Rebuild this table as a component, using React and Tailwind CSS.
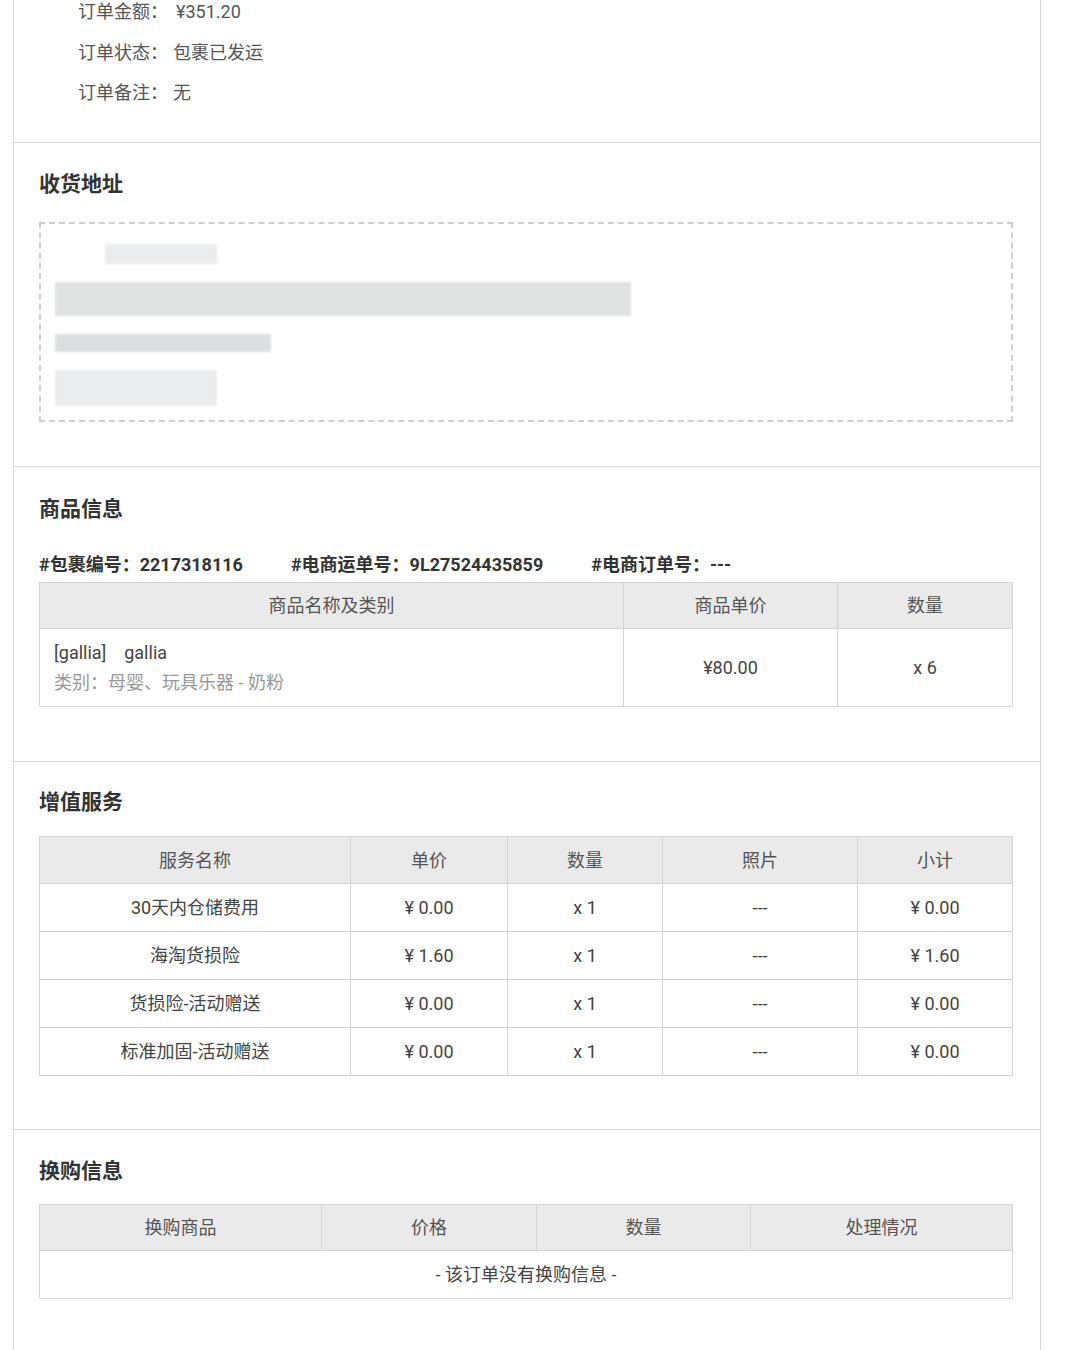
import React from 'react';

const font = { fontFamily: 'Roboto, "Noto Sans CJK SC", sans-serif' };

function Heading({ children }) {
  return <h2 className="text-[21px] leading-[28px] font-bold text-[#333]">{children}</h2>;
}

const th = 'border border-[#d4d4d4] bg-[#ebeaeb] font-normal text-[18px] text-[#555] text-center h-[46px]';
const td = 'border border-[#d4d4d4] text-[18px] text-[#444] text-center h-[48px]';

function Blur({ className }) {
  return <div className={'bg-[#d9dbdc] blur-[1px] ' + className} />;
}

function App() {
  const services = [
    ['30天内仓储费用', '¥ 0.00', 'x 1', '---', '¥ 0.00'],
    ['海淘货损险', '¥ 1.60', 'x 1', '---', '¥ 1.60'],
    ['货损险-活动赠送', '¥ 0.00', 'x 1', '---', '¥ 0.00'],
    ['标准加固-活动赠送', '¥ 0.00', 'x 1', '---', '¥ 0.00'],
  ];

  return (
    <div className="bg-white min-h-[1350px]" style={font}>
      <div className="ml-[13px] w-[1028px] border-x border-[#d8d8d8] bg-white">
        {/* order summary */}
        <div className="pl-[64px] pb-[37px] flex flex-col gap-[16.5px] text-[18px] leading-[24px] text-[#555]">
          <div className="flex"><span className="w-[98px]">订单金额：</span><span>¥351.20</span></div>
          <div className="flex"><span className="w-[95px]">订单状态：</span><span>包裹已发运</span></div>
          <div className="flex"><span className="w-[95px]">订单备注：</span><span>无</span></div>
        </div>

        {/* address */}
        <section className="border-t border-[#d8d8d8] pl-[25px] pr-[27px] pt-[27px] pb-[44px]">
          <Heading>收货地址</Heading>
          <div className="mt-[24px] h-[200px] border-2 border-dashed border-[#cfcfcf] pl-[14px] pt-[20px] flex flex-col">
            <Blur className="ml-[50px] w-[112px] h-[20px] opacity-50" />
            <Blur className="mt-[18px] w-[576px] h-[34px] opacity-80" />
            <Blur className="mt-[18px] w-[216px] h-[18px] opacity-90" />
            <Blur className="mt-[18px] w-[162px] h-[36px] opacity-50" />
          </div>
        </section>

        {/* goods */}
        <section className="border-t border-[#d8d8d8] pl-[25px] pr-[27px] pt-[28px] pb-[54px]">
          <Heading>商品信息</Heading>
          <div className="mt-[30px] flex gap-[48px] text-[18px] leading-[24px] font-bold text-[#333]">
            <span>#包裹编号：2217318116</span>
            <span>#电商运单号：9L27524435859</span>
            <span>#电商订单号：---</span>
          </div>
          <table className="mt-[5px] w-full border-collapse">
            <thead>
              <tr>
                <th className={th + ' w-[584px]'}>商品名称及类别</th>
                <th className={th + ' w-[214px]'}>商品单价</th>
                <th className={th}>数量</th>
              </tr>
            </thead>
            <tbody>
              <tr>
                <td className="border border-[#d4d4d4] h-[78px] px-[14px] text-[18px] leading-[30px]">
                  <div className="text-[#444]">[gallia]&nbsp;&nbsp;&nbsp; gallia</div>
                  <div className="text-[#999]">类别：母婴、玩具乐器 - 奶粉</div>
                </td>
                <td className={td}>¥80.00</td>
                <td className={td}>x 6</td>
              </tr>
            </tbody>
          </table>
        </section>

        {/* services */}
        <section className="border-t border-[#d8d8d8] pl-[25px] pr-[27px] pt-[26px] pb-[53px]">
          <Heading>增值服务</Heading>
          <table className="mt-[20px] w-full border-collapse">
            <thead>
              <tr>
                <th className={th + ' w-[311px] h-[47px]'}>服务名称</th>
                <th className={th + ' w-[157px] h-[47px]'}>单价</th>
                <th className={th + ' w-[155px] h-[47px]'}>数量</th>
                <th className={th + ' w-[195px] h-[47px]'}>照片</th>
                <th className={th + ' h-[47px]'}>小计</th>
              </tr>
            </thead>
            <tbody>
              {services.map((row) => (
                <tr key={row[0]}>
                  {row.map((cell, i) => (
                    <td key={i} className={td + (cell === '---' ? ' text-[13px]' : '')}>{cell}</td>
                  ))}
                </tr>
              ))}
            </tbody>
          </table>
        </section>

        {/* exchange */}
        <section className="border-t border-[#d8d8d8] pl-[25px] pr-[27px] pt-[27px] pb-[60px]">
          <Heading>换购信息</Heading>
          <table className="mt-[19px] w-full border-collapse">
            <thead>
              <tr>
                <th className={th + ' w-[282px]'}>换购商品</th>
                <th className={th + ' w-[215px]'}>价格</th>
                <th className={th + ' w-[214px]'}>数量</th>
                <th className={th}>处理情况</th>
              </tr>
            </thead>
            <tbody>
              <tr>
                <td colSpan={4} className={td}>- 该订单没有换购信息 -</td>
              </tr>
            </tbody>
          </table>
        </section>
      </div>
    </div>
  );
}

export default App;
